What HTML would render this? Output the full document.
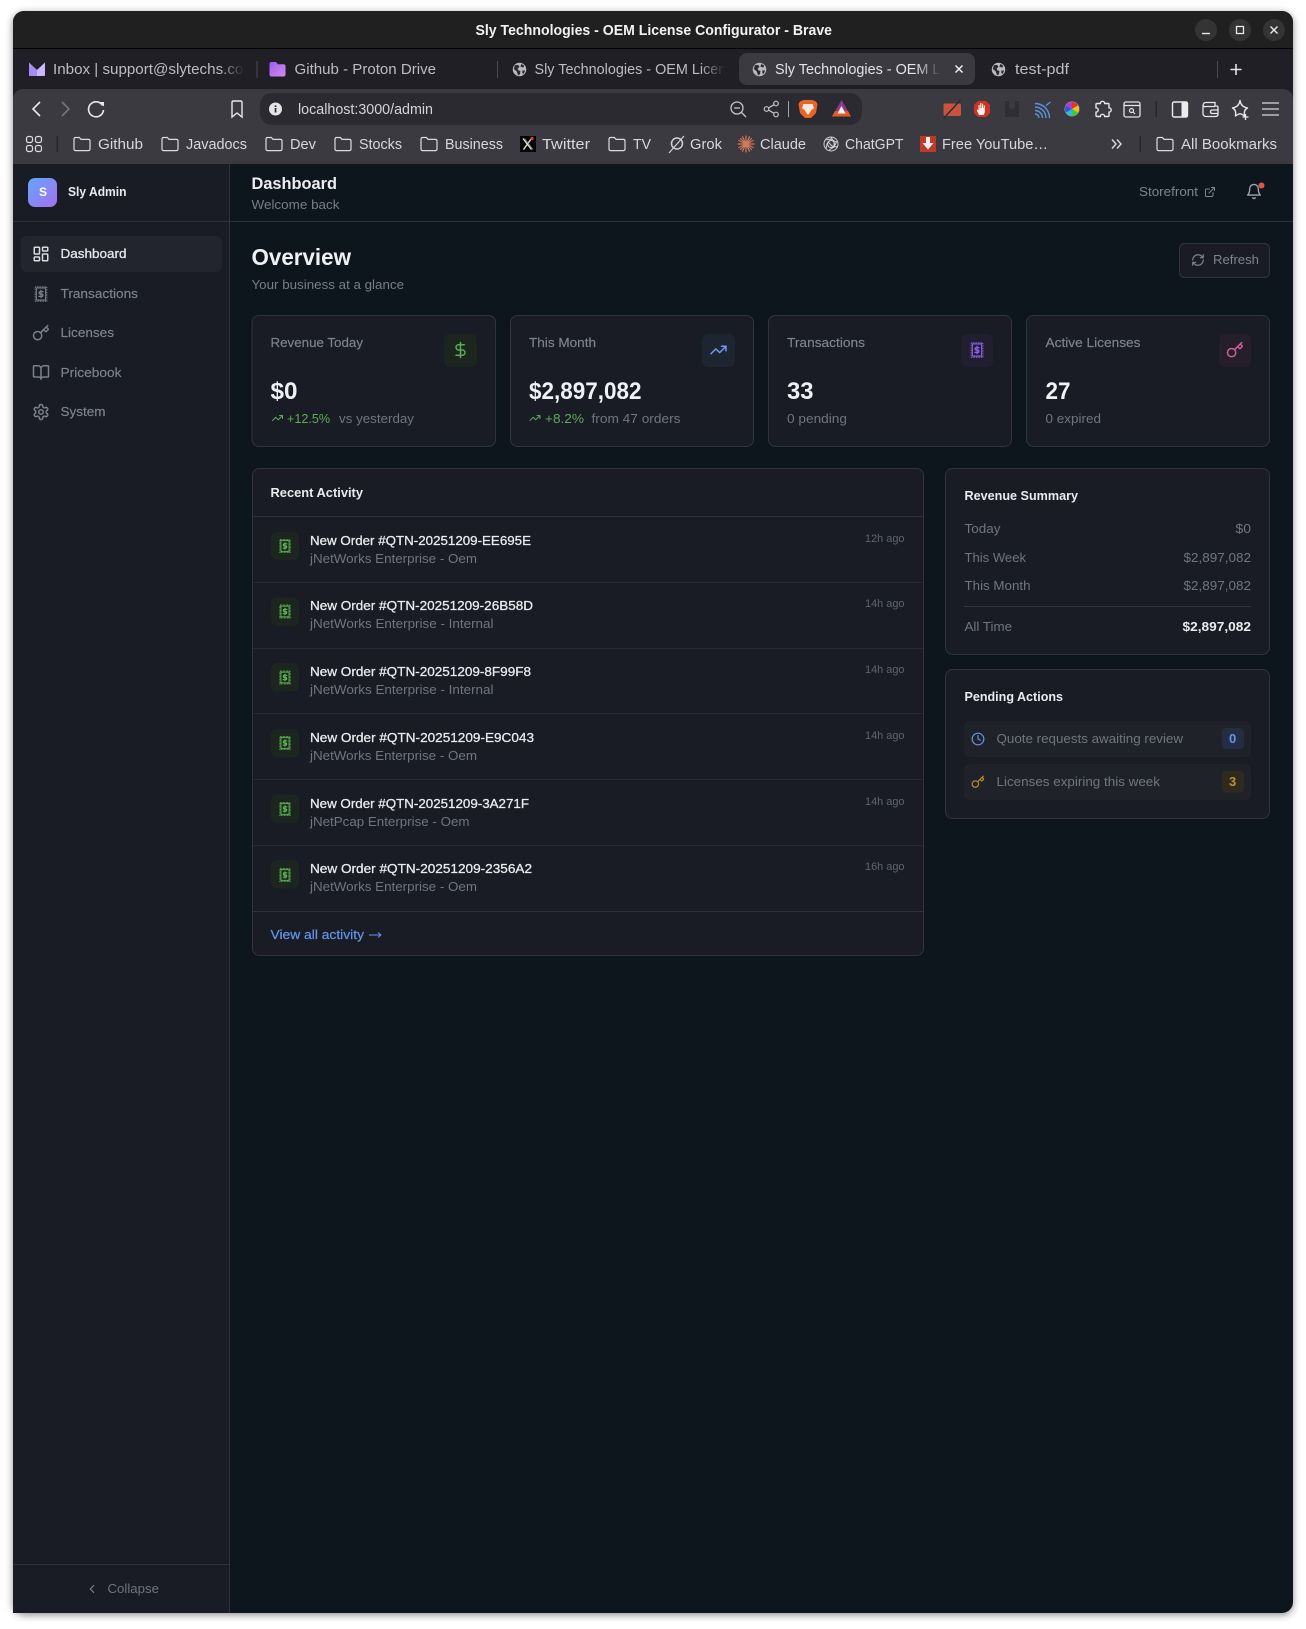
<!DOCTYPE html>
<html lang="en">
<head>
<meta charset="utf-8">
<title>Sly Technologies - OEM License Configurator - Brave</title>
<style>
html,body{margin:0;padding:0;background:#fff;width:1306px;height:1629px;overflow:hidden}
svg{display:block}
text{font-family:"Liberation Sans",sans-serif;white-space:pre}
.i{fill:none;stroke:currentColor;stroke-width:2;stroke-linecap:round;stroke-linejoin:round}
.c{fill:#d9d9dc;font-size:14.5px}
.b{fill:#d8d8db;font-size:14.5px}
.g{fill:#7b808a;font-size:13px}
.m{stroke-width:.3px}
.w{fill:#e8ebf0}
.t{font-size:13px;fill:#e8ebf0;stroke:#e8ebf0;stroke-width:.28px}
.s{font-size:13px;fill:#70757f}
.a{font-size:11px;fill:#5f646e}
.v{font-size:24px;font-weight:bold;fill:#eef1f5}
.l{font-size:13px;fill:#7f848e;stroke:#7f848e;stroke-width:.15px}
.h{font-size:13px;fill:#e8ebf0;font-weight:bold}
</style>
</head>
<body>
<svg xmlns="http://www.w3.org/2000/svg" width="1306" height="1629" viewBox="0 0 1306 1629">
<defs>
<clipPath id="c1"><rect x="50" y="55" width="194" height="28"/></clipPath>
<clipPath id="c3"><rect x="530" y="55" width="195" height="28"/></clipPath>
<clipPath id="cA"><rect x="770" y="55" width="171" height="28"/></clipPath>
<filter id="sh" x="-3%" y="-3%" width="106%" height="106%"><feDropShadow dx="0" dy="2" stdDeviation="4" flood-color="#000" flood-opacity=".45"/></filter>
<linearGradient id="logo" x1="0" y1="0" x2="1" y2="1"><stop offset="0" stop-color="#62a6fb"/><stop offset="1" stop-color="#a56ff0"/></linearGradient>
<linearGradient id="fd1" x1="0" x2="1" y1="0" y2="0"><stop offset="0" stop-color="#1f1f25" stop-opacity="0"/><stop offset="1" stop-color="#1f1f25"/></linearGradient>
<linearGradient id="fd2" x1="0" x2="1" y1="0" y2="0"><stop offset="0" stop-color="#3b3a40" stop-opacity="0"/><stop offset="1" stop-color="#3b3a40"/></linearGradient>
<linearGradient id="proton" x1="0" y1="0" x2="1" y2="1"><stop offset="0" stop-color="#9d5cf6"/><stop offset="1" stop-color="#d78ae8"/></linearGradient>
<symbol id="dash" viewBox="0 0 24 24"><g class="i"><rect x="3" y="3" width="7" height="9" rx="1"/><rect x="14" y="3" width="7" height="5" rx="1"/><rect x="14" y="12" width="7" height="9" rx="1"/><rect x="3" y="16" width="7" height="5" rx="1"/></g></symbol>
<symbol id="rc" viewBox="0 0 24 24"><g class="i"><rect x="4.5" y="2.5" width="15" height="19" stroke-dasharray="1.1 1.1" stroke-linecap="butt"/><rect x="6" y="4" width="12" height="16" stroke-width="1.2"/><path d="M14.8 8.8h-3.7a1.6 1.6 0 0 0 0 3.2h1.8a1.6 1.6 0 0 1 0 3.2H9.2M12 7.2v9.6" stroke-width="1.7"/></g></symbol>
<symbol id="key" viewBox="0 0 24 24"><g class="i"><path d="M15.5 7.5l2.3 2.3a1 1 0 0 0 1.4 0l2.1-2.1a1 1 0 0 0 0-1.4L19 4M21 2l-9.6 9.6"/><circle cx="7.5" cy="15.5" r="5.5"/></g></symbol>
<symbol id="book" viewBox="0 0 24 24"><g class="i"><path d="M12 7v14M3 18a1 1 0 0 1-1-1V4a1 1 0 0 1 1-1h5a4 4 0 0 1 4 4 4 4 0 0 1 4-4h5a1 1 0 0 1 1 1v13a1 1 0 0 1-1 1h-6a3 3 0 0 0-3 3 3 3 0 0 0-3-3z"/></g></symbol>
<symbol id="gear" viewBox="0 0 24 24"><g class="i"><path d="M12.22 2h-.44a2 2 0 0 0-2 2v.18a2 2 0 0 1-1 1.73l-.43.25a2 2 0 0 1-2 0l-.15-.08a2 2 0 0 0-2.73.73l-.22.38a2 2 0 0 0 .73 2.73l.15.1a2 2 0 0 1 1 1.72v.51a2 2 0 0 1-1 1.74l-.15.09a2 2 0 0 0-.73 2.73l.22.38a2 2 0 0 0 2.73.73l.15-.08a2 2 0 0 1 2 0l.43.25a2 2 0 0 1 1 1.73V20a2 2 0 0 0 2 2h.44a2 2 0 0 0 2-2v-.18a2 2 0 0 1 1-1.73l.43-.25a2 2 0 0 1 2 0l.15.08a2 2 0 0 0 2.73-.73l.22-.39a2 2 0 0 0-.73-2.73l-.15-.08a2 2 0 0 1-1-1.74v-.5a2 2 0 0 1 1-1.74l.15-.09a2 2 0 0 0 .73-2.73l-.22-.38a2 2 0 0 0-2.73-.73l-.15.08a2 2 0 0 1-2 0l-.43-.25a2 2 0 0 1-1-1.73V4a2 2 0 0 0-2-2z"/><circle cx="12" cy="12" r="3"/></g></symbol>
<symbol id="trend" viewBox="0 0 24 24"><g class="i"><path d="M22 7l-8.5 8.5-5-5L2 17M16 7h6v6"/></g></symbol>
<symbol id="usd" viewBox="0 0 24 24"><g class="i"><path d="M12 2v20M17 5H9.5a3.5 3.5 0 0 0 0 7h5a3.5 3.5 0 0 1 0 7H6"/></g></symbol>
<symbol id="ext" viewBox="0 0 24 24"><g class="i"><path d="M15 3h6v6M10 14 21 3M18 13v6a2 2 0 0 1-2 2H5a2 2 0 0 1-2-2V8a2 2 0 0 1 2-2h6"/></g></symbol>
<symbol id="bell" viewBox="0 0 24 24"><g class="i"><path d="M6 8a6 6 0 0 1 12 0c0 7 3 9 3 9H3s3-2 3-9M10.3 21a1.94 1.94 0 0 0 3.4 0"/></g></symbol>
<symbol id="rf" viewBox="0 0 24 24"><g class="i"><path d="M3 12a9 9 0 0 1 9-9 9.75 9.75 0 0 1 6.74 2.74L21 8M21 3v5h-5M21 12a9 9 0 0 1-9 9 9.75 9.75 0 0 1-6.74-2.74L3 16M8 16H3v5"/></g></symbol>
<symbol id="clk" viewBox="0 0 24 24"><g class="i"><circle cx="12" cy="12" r="10"/><path d="M12 6v6l4 2"/></g></symbol>
<symbol id="chev" viewBox="0 0 24 24"><g class="i"><path d="M15 18l-6-6 6-6"/></g></symbol>
<symbol id="fold" viewBox="0 0 18 16"><path d="M1 3.2Q1 1.5 2.6 1.5H6.4L8 3.4H15.4Q17 3.4 17 5V13Q17 14.6 15.4 14.6H2.6Q1 14.6 1 13Z" fill="none" stroke="#dcdcdf" stroke-width="1.2"/></symbol>
<symbol id="globe" viewBox="0 0 16 16"><circle cx="8" cy="8" r="7.2" fill="#b9b9be"/><path d="M3 3.5 6.5 3 8 5 6 7 7 9l2 .5-.5 3.5-2 1.2L5 10 2 7.5ZM10 2l3 2-1 2-3-1ZM11 9h3l-1.500 3.500-1.500-.5Z" fill="#2a2a30"/></symbol>
</defs>

<!-- window -->
<rect x="13" y="11" width="1280" height="1602" rx="11" fill="#0e121a" filter="url(#sh)"/>
<path d="M13 48V22A11 11 0 0 1 24 11H1282A11 11 0 0 1 1293 22V48Z" fill="#202020"/>
<rect x="13" y="48" width="1280" height="1" fill="#050505"/>
<rect x="13" y="49" width="1280" height="115" fill="#1f1f25"/>

<!-- title bar -->
<text x="475.5" y="35" font-size="14.5" font-weight="bold" fill="#f2f2f2" textLength="356.5" lengthAdjust="spacingAndGlyphs">Sly Technologies - OEM License Configurator - Brave</text>
<circle cx="1206" cy="30" r="11" fill="#343434"/><circle cx="1240" cy="30" r="11" fill="#343434"/><circle cx="1274" cy="30" r="11" fill="#343434"/>
<path d="M1202 33.5h8" stroke="#e8e8e8" stroke-width="1.4"/>
<rect x="1236.5" y="26.5" width="7" height="7" fill="none" stroke="#e8e8e8" stroke-width="1.3"/>
<path d="M1270.5 26.5l7 7M1277.5 26.5l-7 7" stroke="#e8e8e8" stroke-width="1.4"/>

<!-- tabs -->
<path d="M29 62.5v13.5h16V62.5L37 70Z" fill="#7f6ef0"/><path d="M29 62.5 37 70v6H31Q29 76 29 74Z" fill="#a58bf5"/><path d="M45 62.5 37 70v6h6Q45 76 45 74Z" fill="#c9b6fb"/>
<text class="c" x="53" y="74" style="fill:#bdbdc1" clip-path="url(#c1)" textLength="203" lengthAdjust="spacingAndGlyphs">Inbox | support@slytechs.com</text>
<rect x="220" y="55" width="24" height="28" fill="url(#fd1)"/>
<rect x="256.5" y="61" width="1" height="17" fill="#4a4a50"/>
<path d="M269.5 64Q269.5 62 271.5 62H276L278 64.2H283.5Q285.5 64.2 285.5 66.2V74.5Q285.5 76.5 283.5 76.5H271.5Q269.5 76.5 269.5 74.5Z" fill="url(#proton)"/>
<text class="c" x="294.500" y="74" style="fill:#bdbdc1" textLength="141.500" lengthAdjust="spacingAndGlyphs">Github - Proton Drive</text>
<rect x="497" y="61" width="1" height="17" fill="#4a4a50"/>
<use href="#globe" x="512" y="62" width="15" height="15"/>
<text class="c" x="534.5" y="74" style="fill:#bdbdc1" clip-path="url(#c3)" textLength="207" lengthAdjust="spacingAndGlyphs">Sly Technologies - OEM License</text>
<rect x="700" y="55" width="25" height="28" fill="url(#fd1)"/>
<rect x="739" y="53" width="236" height="32" rx="8" fill="#3b3a40"/>
<use href="#globe" x="752" y="62" width="15" height="15"/>
<text class="c" x="775" y="74" style="fill:#e4e4e6" clip-path="url(#cA)" textLength="207" lengthAdjust="spacingAndGlyphs">Sly Technologies - OEM License</text>
<rect x="916" y="55" width="25" height="28" fill="url(#fd2)"/>
<path d="M955.5 65.5l7 7M962.5 65.5l-7 7" stroke="#f0f0f0" stroke-width="1.5"/>
<use href="#globe" x="991" y="62" width="15" height="15"/>
<text class="c" x="1015" y="74" style="fill:#bdbdc1" textLength="54" lengthAdjust="spacingAndGlyphs">test-pdf</text>
<rect x="1217" y="61" width="1" height="17" fill="#4a4a50"/>
<path d="M1236 64v11M1230.500 69.500h11" stroke="#e4e4e6" stroke-width="1.6"/>

<!-- toolbar + bookmarks -->
<path d="M13 164V99A10 10 0 0 1 23 89H1283A10 10 0 0 1 1293 99V164Z" fill="#3b3a40"/>
<path d="M40 102l-7 7 7 7" fill="none" stroke="#e8e8ea" stroke-width="1.6"/>
<path d="M62 102l7 7-7 7" fill="none" stroke="#77767b" stroke-width="1.6"/>
<path d="M102.500 105.500A7.500 7.500 0 1 0 103.500 110" fill="none" stroke="#e8e8ea" stroke-width="1.6"/><path d="M99 102h5v4.500z" fill="#e8e8ea"/>
<path d="M232 102.500Q232 101 233.500 101H240.500Q242 101 242 102.500V117L237 113 232 117Z" fill="none" stroke="#e8e8ea" stroke-width="1.4"/>
<rect x="260" y="93" width="602" height="32" rx="12" fill="#2b2a30"/>
<circle cx="275.500" cy="109" r="6.500" fill="#e4e4e6"/><rect x="274.700" y="108" width="1.700" height="4.500" fill="#2b2a30"/><rect x="274.700" y="105.300" width="1.700" height="1.700" fill="#2b2a30"/>
<text x="298" y="114" font-size="14.500" fill="#d4d4d8" textLength="135" lengthAdjust="spacingAndGlyphs">localhost:3000/admin</text>
<circle cx="737" cy="108" r="6" fill="none" stroke="#c5c5c9" stroke-width="1.300"/><path d="M741.500 112.500l4.500 4.500M734 108h6" stroke="#c5c5c9" stroke-width="1.300"/>
<g fill="none" stroke="#c5c5c9" stroke-width="1.200"><circle cx="766.500" cy="109" r="2.300"/><circle cx="776" cy="103.500" r="2.300"/><circle cx="776" cy="114.500" r="2.300"/><path d="M768.500 108l5.500-3.300M768.500 110l5.500 3.300"/></g>
<rect x="788" y="101" width="1" height="16" fill="#a5a5a9"/>
<path d="M800 101.500l3.500-1.500h9l3.500 1.500 1.500 2.500-1.500 9-5 5h-6l-5-5-1.500-9z" fill="#e8642a"/><path d="M803.500 104h9l1.500 4-2.500 2-3.500 5-3.500-5-2.500-2z" fill="#f8e7d8"/>
<path d="M841.500 100l9.500 16.500h-19z" fill="#8e3a8c"/><path d="M832 116.500l3-5.500h13l3 5.500z" fill="#e25a26"/><path d="M841.500 106l4 7.500h-8z" fill="#f4f4f4"/>

<!-- extensions -->
<path d="M945 103.500h14q2 0 2 2v9q0 1.500-2 1.500h-14q-1.500 0-1.500-2v-9q0-1.500 1.500-1.500z" fill="#c9533f"/><path d="M960.500 100 944 118" stroke="#2c2b30" stroke-width="1.500"/>
<path d="M978 101h8l4 4v8l-4 4h-8l-4-4v-8z" fill="#cc3423"/><path d="M979 115l-2-4v-1.500l1.500.5v-5h1.100v3.500h.6V103h1.200v5h.6v-4.200h1.100V108h.6v-2.600h1.100V112l-1 3z" fill="#f5f0ec"/>
<path d="M1005 101h4v6l3 3 3-3v-6h4v15q0 1-1 1h-12q-1 0-1-1z" fill="#2f2f33"/>
<g fill="none" stroke="#5a93e0" stroke-width="1.400"><path d="M1035 103.500A14.500 14.500 0 0 1 1049.500 118"/><path d="M1035 107A11 11 0 0 1 1046 118"/><path d="M1035 110.500A7.500 7.500 0 0 1 1042.500 118"/><path d="M1035 114A4 4 0 0 1 1039 118"/><path d="M1046 105.500l4.500-3.500"/></g>
<g transform="translate(1072 109)"><circle r="7.500" fill="#9a9a9e"/><path d="M0 0V-7A7 7 0 0 1 6 -3.500z" fill="#e8302c"/><path d="M0 0 6 -3.500A7 7 0 0 1 6 3.500z" fill="#f0c31c"/><path d="M0 0 6 3.500A7 7 0 0 1 0 7z" fill="#3ec64a"/><path d="M0 0V7A7 7 0 0 1 -6 3.500z" fill="#2fbcd8"/><path d="M0 0 -6 3.500A7 7 0 0 1 -6 -3.500z" fill="#3158e0"/><path d="M0 0 -6 -3.500A7 7 0 0 1 0 -7z" fill="#b83ad0"/></g>
<path d="M1097 103.500h3.300a2.200 2.200 0 1 1 4.400 0h3.300a1 1 0 0 1 1 1v3.300a2.200 2.200 0 1 1 0 4.400v3.300a1 1 0 0 1-1 1h-3.300a2.200 2.200 0 1 0-4.400 0H1097a1 1 0 0 1-1-1v-3.300a2.200 2.200 0 1 0 0-4.400v-3.300a1 1 0 0 1 1-1z" fill="none" stroke="#e8e8ea" stroke-width="1.400"/>
<rect x="1124" y="102" width="16" height="15" rx="1.800" fill="none" stroke="#e4e4e6" stroke-width="1.300"/><path d="M1124 105.500h16" stroke="#e4e4e6" stroke-width="1.300"/><circle cx="1131.500" cy="110.500" r="2" fill="none" stroke="#e4e4e6" stroke-width="1.200"/><path d="M1133 112l2 2" stroke="#e4e4e6" stroke-width="1.200"/>
<rect x="1155.500" y="101" width="1.500" height="16" fill="#26252a"/>
<rect x="1172.500" y="102" width="15" height="15" rx="1.500" fill="none" stroke="#ececee" stroke-width="1.400"/><rect x="1181.500" y="102" width="6" height="15" fill="#ececee"/>
<path d="M1203 106q0-3.500 3-3.500h9v3.500h1.500q1.500 0 1.500 1.500V114q0 2.500-2.500 2.500H1206q-3 0-3-3zM1203.500 105.500q0 1.500 2.500 1h9M1212 110h6v3.500h-6q-1.500 0-1.500-1.700t1.500-1.800z" fill="none" stroke="#e8e8ea" stroke-width="1.300"/>
<path d="M1240 100.500c.8 4.500 3 6.500 7.500 7.500-3 1.500-3.500 3.500-3 8-2-1.500-3-2.200-4.500-2.200s-2.500.7-4.500 2.200c.5-4.500 0-6.500-3-8 4.500-1 6.700-3 7.500-7.500z" fill="none" stroke="#e8e8ea" stroke-width="1.400" stroke-linejoin="round"/><path d="M1245.500 114v6M1242.500 117h6" stroke="#e8e8ea" stroke-width="1.300"/>
<path d="M1262 103h17M1262 109h17M1262 115h17" stroke="#bdbdc1" stroke-width="1.600"/>

<!-- bookmarks -->
<g fill="none" stroke="#dcdcdf" stroke-width="1.200"><rect x="26.500" y="136.500" width="6" height="6" rx="2"/><rect x="35.500" y="136.500" width="6" height="6" rx="2"/><rect x="26.500" y="145.500" width="6" height="6" rx="2"/><rect x="35.500" y="145.500" width="6" height="6" rx="2"/></g>
<rect x="56.500" y="136" width="1.500" height="16" fill="#26252a"/>
<use href="#fold" x="73" y="136" width="18" height="16"/><text class="b" x="98" y="149" textLength="45" lengthAdjust="spacingAndGlyphs">Github</text>
<use href="#fold" x="161" y="136" width="18" height="16"/><text class="b" x="186" y="149" textLength="61" lengthAdjust="spacingAndGlyphs">Javadocs</text>
<use href="#fold" x="265" y="136" width="18" height="16"/><text class="b" x="290" y="149" textLength="26" lengthAdjust="spacingAndGlyphs">Dev</text>
<use href="#fold" x="334" y="136" width="18" height="16"/><text class="b" x="359" y="149" textLength="43" lengthAdjust="spacingAndGlyphs">Stocks</text>
<use href="#fold" x="420" y="136" width="18" height="16"/><text class="b" x="445" y="149" textLength="58" lengthAdjust="spacingAndGlyphs">Business</text>
<rect x="520" y="136" width="16" height="16" fill="#050505"/><path d="M523 138.500l8.500 11M531.500 138.500l-8 11" stroke="#e8e8e8" stroke-width="1.300"/><path d="M524.500 138.500l8.500 11" stroke="#888" stroke-width=".8"/><circle cx="532" cy="138.500" r="1.600" fill="#e23a3a"/>
<text class="b" x="542" y="149" textLength="48" lengthAdjust="spacingAndGlyphs">Twitter</text>
<use href="#fold" x="608" y="136" width="18" height="16"/><text class="b" x="633" y="149" textLength="18" lengthAdjust="spacingAndGlyphs">TV</text>
<circle cx="677" cy="143.500" r="5.500" fill="none" stroke="#d2d2d5" stroke-width="1.500"/><path d="M669 153 684 136" stroke="#d2d2d5" stroke-width="1.200"/>
<text class="b" x="690" y="149" textLength="32" lengthAdjust="spacingAndGlyphs">Grok</text>
<g stroke="#d17a56" stroke-width="1.200" stroke-linecap="round"><path d="M746 136v16M738 144h16M740.500 138.500l11 11M740.500 149.500l11-11M742.500 136.800l7 14.400M749.500 136.800l-7 14.400M738.800 140.500l14.400 7M738.800 147.500l14.400-7"/></g>
<circle cx="746" cy="144" r="2.500" fill="#d17a56"/>
<text class="b" x="760" y="149" textLength="46" lengthAdjust="spacingAndGlyphs">Claude</text>
<g fill="none" stroke="#cfcfd2" stroke-width="1"><circle cx="831" cy="144" r="7"/><circle cx="831" cy="144" r="3.500"/><path d="M825 140l6-1 5 3M837 141l-3 6-5 3M826 149l1-5 4-5M831 137l3 5 0 6M838 147l-6-1-4-4"/></g>
<text class="b" x="845" y="149" textLength="58.500" lengthAdjust="spacingAndGlyphs">ChatGPT</text>
<rect x="920" y="136" width="16" height="16" fill="#bd3a2a"/><path d="M926 137h4v6h3.500l-5.500 6.500-5.500-6.500H926z" fill="#f4f0ee"/>
<text class="b" x="942" y="149" textLength="106" lengthAdjust="spacingAndGlyphs">Free YouTube…</text>
<path d="M1112 139.500l4 4.500-4 4.500M1117 139.500l4 4.500-4 4.500" fill="none" stroke="#dcdcdf" stroke-width="1.400"/>
<rect x="1139.500" y="136" width="1.500" height="16" fill="#26252a"/>
<use href="#fold" x="1156" y="136" width="18" height="16"/><text class="b" x="1181" y="149" textLength="96" lengthAdjust="spacingAndGlyphs">All Bookmarks</text>

<!-- sidebar -->
<rect x="13" y="164" width="216" height="1449" fill="#191c24"/>
<rect x="229" y="164" width="1" height="1449" fill="#2e323b"/>
<rect x="13" y="221" width="1280" height="1" fill="#2e323b"/>
<rect x="13" y="1564" width="216" height="1" fill="#2e323b"/>
<rect x="28" y="178" width="29" height="29" rx="7" fill="url(#logo)"/>
<text x="39" y="196" font-size="12" font-weight="bold" fill="#fff">S</text>
<text class="m" x="68" y="196" font-size="12.500" font-weight="bold" fill="#e8ebf0" textLength="58.500" lengthAdjust="spacingAndGlyphs">Sly Admin</text>
<rect x="21" y="236" width="201" height="36" rx="6" fill="#22252e"/>
<g style="color:#d8dbe0"><use href="#dash" x="32" y="245" width="18" height="18"/></g>
<text x="60.500" y="258" font-size="13" fill="#e3e6eb" stroke="#e3e6eb" stroke-width=".3" textLength="66" lengthAdjust="spacingAndGlyphs">Dashboard</text>
<g style="color:#7b808a">
<use href="#rc" x="32" y="285" width="18" height="18"/>
<use href="#key" x="32" y="324" width="18" height="18"/>
<use href="#book" x="32" y="363.500" width="18" height="18"/>
<use href="#gear" x="32" y="403" width="18" height="18"/>
</g>
<text class="l" x="60.500" y="298" textLength="77.500" lengthAdjust="spacingAndGlyphs">Transactions</text>
<text class="l" x="60.500" y="337" textLength="53.500" lengthAdjust="spacingAndGlyphs">Licenses</text>
<text class="l" x="60.500" y="377" textLength="61" lengthAdjust="spacingAndGlyphs">Pricebook</text>
<text class="l" x="60.500" y="416" textLength="45" lengthAdjust="spacingAndGlyphs">System</text>
<g style="color:#7b808a"><use href="#chev" x="85" y="1582" width="14" height="14"/></g>
<text x="107.500" y="1593" font-size="13" fill="#6f747e" textLength="51.500" lengthAdjust="spacingAndGlyphs">Collapse</text>

<!-- header -->
<text x="251.500" y="189" font-size="17" font-weight="bold" fill="#eceef2" textLength="85.500" lengthAdjust="spacingAndGlyphs">Dashboard</text>
<text x="251.500" y="209" font-size="13" fill="#787d87" textLength="88" lengthAdjust="spacingAndGlyphs">Welcome back</text>
<text x="1139" y="196" font-size="13" fill="#7f848e" textLength="59" lengthAdjust="spacingAndGlyphs">Storefront</text>
<g style="color:#7f848e"><use href="#ext" x="1204" y="186" width="12" height="12"/></g>
<g style="color:#a0a4ac"><use href="#bell" x="1245.500" y="182" width="17" height="19"/></g>
<circle cx="1261.500" cy="185.500" r="3" fill="#e5534b"/>

<!-- overview -->
<text x="251.500" y="265" font-size="23" font-weight="bold" fill="#eef1f5" textLength="99.500" lengthAdjust="spacingAndGlyphs">Overview</text>
<text x="251.500" y="289" font-size="13" fill="#787d87" textLength="152.500" lengthAdjust="spacingAndGlyphs">Your business at a glance</text>
<rect x="1179.500" y="243.500" width="90" height="34" rx="5" fill="#191c24" stroke="#30343e"/>
<g style="color:#7f848e"><use href="#rf" x="1191" y="253" width="14" height="14"/></g>
<text x="1213" y="264" font-size="13" fill="#7f848e" textLength="46" lengthAdjust="spacingAndGlyphs">Refresh</text>

<!-- stat cards -->
<g fill="#191c24" stroke="#30343e">
<rect x="252" y="315.500" width="243.500" height="131" rx="7"/>
<rect x="510.500" y="315.500" width="243" height="131" rx="7"/>
<rect x="768.500" y="315.500" width="243" height="131" rx="7"/>
<rect x="1026.500" y="315.500" width="243" height="131" rx="7"/>
</g>
<rect x="444" y="334" width="33" height="33" rx="6" fill="#1c261f"/>
<rect x="702" y="334" width="33" height="33" rx="6" fill="#1c2530"/>
<rect x="961" y="334" width="32" height="33" rx="6" fill="#211f2f"/>
<rect x="1219" y="334" width="32" height="33" rx="6" fill="#251f2b"/>
<g style="color:#5aad52"><use href="#usd" x="451.500" y="341" width="18" height="18"/></g>
<g style="color:#6a9cf0"><use href="#trend" x="709.500" y="341" width="18" height="18"/></g>
<g style="color:#8a63e8"><use href="#rc" x="968" y="341" width="18" height="18"/></g>
<g style="color:#cf5d9e"><use href="#key" x="1226" y="341" width="18" height="18"/></g>
<g class="l">
<text x="270.500" y="347" textLength="92.500" lengthAdjust="spacingAndGlyphs">Revenue Today</text>
<text x="529" y="347" textLength="67" lengthAdjust="spacingAndGlyphs">This Month</text>
<text x="787" y="347" textLength="78" lengthAdjust="spacingAndGlyphs">Transactions</text>
<text x="1045.500" y="347" textLength="95" lengthAdjust="spacingAndGlyphs">Active Licenses</text>
</g>
<text class="v" x="270.500" y="399" textLength="27" lengthAdjust="spacingAndGlyphs">$0</text>
<text class="v" x="529" y="399" textLength="112.500" lengthAdjust="spacingAndGlyphs">$2,897,082</text>
<text class="v" x="787" y="399" textLength="26.500" lengthAdjust="spacingAndGlyphs">33</text>
<text class="v" x="1045.500" y="399" textLength="25" lengthAdjust="spacingAndGlyphs">27</text>
<g style="color:#5aad52"><use href="#trend" x="271.500" y="412" width="12" height="12"/><use href="#trend" x="529" y="412" width="12" height="12"/></g>
<text x="287" y="423" font-size="13" fill="#5aad52" textLength="43" lengthAdjust="spacingAndGlyphs">+12.5%</text>
<text x="339" y="423" font-size="13" fill="#70757f" textLength="75" lengthAdjust="spacingAndGlyphs">vs yesterday</text>
<text x="545" y="423" font-size="13" fill="#5aad52" textLength="39" lengthAdjust="spacingAndGlyphs">+8.2%</text>
<text x="591.500" y="423" font-size="13" fill="#70757f" textLength="89" lengthAdjust="spacingAndGlyphs">from 47 orders</text>
<text x="787" y="423" font-size="13" fill="#70757f" textLength="60" lengthAdjust="spacingAndGlyphs">0 pending</text>
<text x="1045.500" y="423" font-size="13" fill="#70757f" textLength="55.500" lengthAdjust="spacingAndGlyphs">0 expired</text>

<!-- recent activity -->
<rect x="252.500" y="468.500" width="671" height="487" rx="7" fill="#191c24" stroke="#30343e"/>
<text class="h" x="270.500" y="497" textLength="92.500" lengthAdjust="spacingAndGlyphs">Recent Activity</text>
<g fill="#2e323b"><rect x="253" y="516" width="670" height="1"/><rect x="253" y="911" width="670" height="1"/></g>
<g fill="#252932"><rect x="253" y="582" width="670" height="1"/><rect x="253" y="648" width="670" height="1"/><rect x="253" y="713" width="670" height="1"/><rect x="253" y="779" width="670" height="1"/><rect x="253" y="845" width="670" height="1"/></g>
<g fill="#1c261f">
<rect x="271" y="532" width="28" height="28" rx="6"/>
<rect x="271" y="597.500" width="28" height="28.500" rx="6"/>
<rect x="271" y="663" width="28" height="28.500" rx="6"/>
<rect x="271" y="729" width="28" height="28.500" rx="6"/>
<rect x="271" y="794.500" width="28" height="28.500" rx="6"/>
<rect x="271" y="860" width="28" height="28.500" rx="6"/>
</g>
<g style="color:#62b858">
<use href="#rc" x="277" y="538" width="16" height="16"/>
<use href="#rc" x="277" y="603.500" width="16" height="16"/>
<use href="#rc" x="277" y="669.500" width="16" height="16"/>
<use href="#rc" x="277" y="735" width="16" height="16"/>
<use href="#rc" x="277" y="801" width="16" height="16"/>
<use href="#rc" x="277" y="867" width="16" height="16"/>
</g>
<text class="t" x="310" y="545" textLength="221" lengthAdjust="spacingAndGlyphs">New Order #QTN-20251209-EE695E</text>
<text class="s" x="310" y="563" textLength="167" lengthAdjust="spacingAndGlyphs">jNetWorks Enterprise - Oem</text>
<text class="a" x="865" y="542" textLength="39.500" lengthAdjust="spacingAndGlyphs">12h ago</text>
<text class="t" x="310" y="610" textLength="223" lengthAdjust="spacingAndGlyphs">New Order #QTN-20251209-26B58D</text>
<text class="s" x="310" y="628" textLength="183.500" lengthAdjust="spacingAndGlyphs">jNetWorks Enterprise - Internal</text>
<text class="a" x="865" y="607" textLength="39.500" lengthAdjust="spacingAndGlyphs">14h ago</text>
<text class="t" x="310" y="676" textLength="221" lengthAdjust="spacingAndGlyphs">New Order #QTN-20251209-8F99F8</text>
<text class="s" x="310" y="694" textLength="183.500" lengthAdjust="spacingAndGlyphs">jNetWorks Enterprise - Internal</text>
<text class="a" x="865" y="673" textLength="39.500" lengthAdjust="spacingAndGlyphs">14h ago</text>
<text class="t" x="310" y="742" textLength="224" lengthAdjust="spacingAndGlyphs">New Order #QTN-20251209-E9C043</text>
<text class="s" x="310" y="760" textLength="167" lengthAdjust="spacingAndGlyphs">jNetWorks Enterprise - Oem</text>
<text class="a" x="865" y="739" textLength="39.500" lengthAdjust="spacingAndGlyphs">14h ago</text>
<text class="t" x="310" y="808" textLength="219" lengthAdjust="spacingAndGlyphs">New Order #QTN-20251209-3A271F</text>
<text class="s" x="310" y="826" textLength="159.500" lengthAdjust="spacingAndGlyphs">jNetPcap Enterprise - Oem</text>
<text class="a" x="865" y="805" textLength="39.500" lengthAdjust="spacingAndGlyphs">14h ago</text>
<text class="t" x="310" y="873" textLength="222" lengthAdjust="spacingAndGlyphs">New Order #QTN-20251209-2356A2</text>
<text class="s" x="310" y="891" textLength="167" lengthAdjust="spacingAndGlyphs">jNetWorks Enterprise - Oem</text>
<text class="a" x="865" y="870" textLength="39.500" lengthAdjust="spacingAndGlyphs">16h ago</text>
<text x="270.500" y="939" font-size="13" fill="#6594ea" stroke="#6594ea" stroke-width=".2" textLength="93.500" lengthAdjust="spacingAndGlyphs">View all activity</text>
<path d="M369 935h12M378 932.500l3 2.500-3 2.500" fill="none" stroke="#6594ea" stroke-width="1"/>

<!-- revenue summary -->
<rect x="945.500" y="468.500" width="324" height="186" rx="7" fill="#191c24" stroke="#30343e"/>
<text class="h" x="964.500" y="500" textLength="113.500" lengthAdjust="spacingAndGlyphs">Revenue Summary</text>
<g font-size="13" fill="#70757f">
<text x="964.500" y="533" textLength="36" lengthAdjust="spacingAndGlyphs">Today</text>
<text x="964.500" y="562" textLength="61.500" lengthAdjust="spacingAndGlyphs">This Week</text>
<text x="964.500" y="590" textLength="66" lengthAdjust="spacingAndGlyphs">This Month</text>
<text x="964.500" y="631" textLength="47.500" lengthAdjust="spacingAndGlyphs">All Time</text>
<text x="1235.500" y="533" textLength="15.500" lengthAdjust="spacingAndGlyphs">$0</text>
<text x="1183.500" y="562" textLength="67.500" lengthAdjust="spacingAndGlyphs">$2,897,082</text>
<text x="1183.500" y="590" textLength="67.500" lengthAdjust="spacingAndGlyphs">$2,897,082</text>
</g>
<rect x="964" y="606" width="287" height="1" fill="#30343e"/>
<text x="1182.500" y="631" font-size="13" font-weight="bold" fill="#e8ebf0" textLength="68.500" lengthAdjust="spacingAndGlyphs">$2,897,082</text>

<!-- pending actions -->
<rect x="945.500" y="669.500" width="324" height="149" rx="7" fill="#191c24" stroke="#30343e"/>
<text class="h" x="964.500" y="701" textLength="98.500" lengthAdjust="spacingAndGlyphs">Pending Actions</text>
<rect x="964" y="721" width="287" height="36" rx="6" fill="#1f2229"/>
<rect x="964" y="764" width="287" height="36" rx="6" fill="#1f2229"/>
<g style="color:#6594ea"><use href="#clk" x="971" y="732" width="14" height="14"/></g>
<g style="color:#b9922f"><use href="#key" x="971" y="775" width="14" height="14"/></g>
<text x="996.500" y="743" font-size="13" fill="#70757f" textLength="186.500" lengthAdjust="spacingAndGlyphs">Quote requests awaiting review</text>
<text x="996.500" y="786" font-size="13" fill="#70757f" textLength="163.500" lengthAdjust="spacingAndGlyphs">Licenses expiring this week</text>
<rect x="1222" y="728" width="22" height="21" rx="4" fill="#232e44"/>
<rect x="1222" y="771" width="22" height="21.500" rx="4" fill="#2f2a1f"/>
<text x="1229" y="743" font-size="13" font-weight="bold" fill="#6594ea">0</text>
<text x="1229" y="786" font-size="13" font-weight="bold" fill="#b9922f">3</text>
</svg>
</body>
</html>
